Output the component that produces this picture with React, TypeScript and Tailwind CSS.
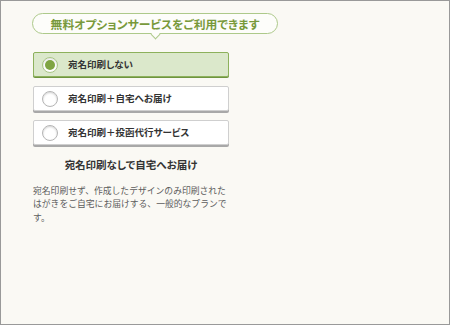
import React from "react";

const font = "font-['Noto_Sans_CJK_JP','Noto_Sans',sans-serif]";

function Radio({ selected }: { selected: boolean }) {
  if (selected) {
    return (
      <div className="flex h-[16px] w-[16px] items-center justify-center rounded-full border border-[#a9c585] bg-white shadow-[inset_0_1px_2px_rgba(0,0,0,0.15)]">
        <div className="h-[10px] w-[10px] rounded-full bg-[#7fa443]" />
      </div>
    );
  }
  return (
    <div className="h-[16px] w-[16px] rounded-full border border-[#b5b5b5] bg-white shadow-[inset_0_1px_2px_rgba(0,0,0,0.18)]" />
  );
}

function Option({ label, selected }: { label: string; selected?: boolean }) {
  return (
    <div
      className={
        selected
          ? "flex h-[25px] w-[196px] items-center gap-[10px] rounded-[2px] border border-[#8db15c] bg-[#dbe8cb] pl-[8px] shadow-[0_1px_0_#6f9440]"
          : "flex h-[25px] w-[196px] items-center gap-[10px] rounded-[2px] border border-[#cfcfcf] bg-white pl-[8px] shadow-[0_2px_0_#a8a8a8]"
      }
    >
      <Radio selected={!!selected} />
      <span className="text-[9.5px] font-bold leading-none text-[#333] [font-feature-settings:'palt']">
        {label}
      </span>
    </div>
  );
}

export default function App() {
  return (
    <div className={`h-[325px] w-[450px] border border-[#999] bg-[#faf9f4] ${font}`}>
      <div className="pl-[31px] pt-[12px]">
        <div className="relative flex h-[21px] w-[246px] items-center justify-center rounded-full border border-[#adc98a] bg-[#fdfdfa]">
          <span className="text-[11.8px] font-bold leading-none text-[#78993a] [font-feature-settings:'palt']">
            無料オプションサービスをご利用できます
          </span>
          <div className="absolute left-[119px] top-[17px] h-[7px] w-[7px] rotate-45 border-b border-r border-[#adc98a] bg-[#fdfdfa]" />
        </div>
        <div className="mt-[18px] flex flex-col gap-[9px] pl-[1px]">
          <Option label="宛名印刷しない" selected />
          <Option label="宛名印刷＋自宅へお届け" />
          <Option label="宛名印刷＋投函代行サービス" />
        </div>
        <div className="mt-[15px] w-[198px] text-center text-[10.5px] font-bold leading-none text-[#333] [font-feature-settings:'palt']">
          宛名印刷なしで自宅へお届け
        </div>
        <p className="mt-[13px] w-[197px] pl-[1px] text-[8.8px] leading-[13.5px] text-[#5c5c5c]">
          宛名印刷せず、作成したデザインのみ印刷されたはがきをご自宅にお届けする、一般的なプランです。
        </p>
      </div>
    </div>
  );
}
